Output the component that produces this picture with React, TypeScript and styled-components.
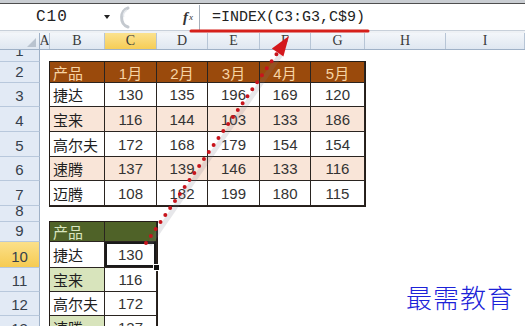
import React from "react";
import styled, { createGlobalStyle } from "styled-components";

const COLS = "40px 10px 55px 52px 51px 52px 51px 54px 81px 1fr";
const ROW_HEIGHTS = [12, 21, 24, 25, 25, 24, 25, 16, 20, 26, 24, 24, 24];

const GlobalStyle = createGlobalStyle`
  html, body { margin: 0; padding: 0; background: #fff; }
  body { width: 525px; height: 326px; overflow: hidden; }
`;

const Frame = styled.div`
  position: relative;
  width: 525px;
  height: 326px;
  overflow: hidden;
  background: #fff;
  font-family: "Liberation Sans", "Noto Sans CJK SC", sans-serif;
`;

const TopEdge = styled.div`
  height: 3px;
  background: #c9cdd2;
  border-bottom: 1px solid #4e4e4e;
`;

const FormulaBar = styled.div`
  display: flex;
  align-items: stretch;
  height: 26px;
  background: #fff;
`;

const NameBox = styled.div`
  width: 67px;
  padding-left: 36px;
  display: flex;
  align-items: center;
  font-family: "Liberation Mono", monospace;
  font-size: 16px;
  letter-spacing: 1px;
  color: #222;
`;

const DropArrow = styled.div`
  width: 13px;
  display: flex;
  align-items: center;
  justify-content: flex-start;
  &::after {
    content: "";
    border-left: 3.5px solid transparent;
    border-right: 3.5px solid transparent;
    border-top: 4px solid #222;
    margin-left: 1px;
  }
`;

const Knob = styled.svg`
  width: 14px;
  height: 26px;
  flex: none;
`;

const FxCell = styled.div`
  flex: none;
  width: 69px;
  display: flex;
  align-items: center;
  justify-content: flex-end;
  padding-right: 6px;
  box-sizing: border-box;
  font-family: "Liberation Serif", serif;
  font-style: italic;
  font-weight: bold;
  font-size: 15px;
  color: #333;
  sub {
    font-size: 9px;
    vertical-align: -1px;
    margin-left: 1px;
    font-weight: normal;
  }
`;

const FormulaInput = styled.div`
  flex: 1;
  display: flex;
  align-items: center;
  margin: 1px 0 0;
  padding-left: 12px;
  border-left: 1px solid #a7b0bb;
  font-family: "Liberation Mono", monospace;
  font-size: 15px;
  color: #222;
`;

const Gap = styled.div`
  height: 2px;
  background: #eef1f5;
  border-top: 1px solid #c8d0da;
`;

const HeaderRow = styled.div`
  display: grid;
  grid-template-columns: ${COLS};
  height: 17px;
  background: linear-gradient(#f3f6fa, #dfe7f1);
  border-bottom: 1px solid #9fb1c7;
  box-sizing: border-box;
`;

const ColHead = styled.div<{ $active?: boolean }>`
  display: flex;
  align-items: center;
  justify-content: center;
  border-right: 1px solid #b7c5d6;
  font-family: "Liberation Serif", serif;
  font-size: 14px;
  color: #3a3a3a;
  background: ${(p) => (p.$active ? "linear-gradient(#fbe28f, #f6cd56)" : "transparent")};
  overflow: hidden;
`;

const Corner = styled.div`
  position: relative;
  border-right: 1px solid #9fb1c7;
  &::after {
    content: "";
    position: absolute;
    right: 3px;
    bottom: 2px;
    border-left: 9px solid transparent;
    border-bottom: 9px solid #b9c3cf;
  }
`;

const Body = styled.div`
  display: grid;
  grid-template-columns: ${COLS};
  grid-template-rows: ${ROW_HEIGHTS.map((h) => `${h}px`).join(" ")};
`;

const RowHead = styled.div<{ $row: number; $active?: boolean }>`
  grid-column: 1;
  grid-row: ${(p) => p.$row};
  display: flex;
  align-items: flex-end;
  justify-content: center;
  overflow: hidden;
  box-sizing: border-box;
  padding-bottom: 2px;
  background: ${(p) => (p.$active ? "linear-gradient(#fbe08a, #f6cb52)" : "#e2eaf5")};
  border-right: 1px solid #9fb1c7;
  border-bottom: 1px solid #b8c8dc;
  font-size: 15px;
  line-height: 17px;
  color: #36404c;
`;

const Table = styled.div<{ $area: string; $cols: string; $rows: string }>`
  grid-area: ${(p) => p.$area};
  display: grid;
  grid-template-columns: ${(p) => p.$cols};
  grid-template-rows: ${(p) => p.$rows};
  outline: 2px solid #241d18;
  outline-offset: -1px;
  align-self: start;
`;

const Cell = styled.div<{ $bg: string; $fg: string; $left?: boolean; $selected?: boolean }>`
  position: relative;
  display: flex;
  align-items: center;
  justify-content: ${(p) => (p.$left ? "flex-start" : "center")};
  padding-left: ${(p) => (p.$left ? "3px" : "0")};
  box-sizing: border-box;
  background: ${(p) => p.$bg};
  color: ${(p) => p.$fg};
  border-right: 1px solid #2a2420;
  border-bottom: 1px solid #2a2420;
  font-size: 15px;
  white-space: nowrap;
  box-shadow: ${(p) => (p.$selected ? "inset 0 0 0 2px #1a1a1a, inset 0 0 0 3px #fff" : "none")};
`;

const FillHandle = styled.span`
  position: absolute;
  right: -4px;
  bottom: -4px;
  width: 5px;
  height: 5px;
  background: #111;
  border: 1px solid #fff;
  z-index: 2;
`;

const Overlay = styled.svg`
  position: absolute;
  left: 0;
  top: 0;
  width: 525px;
  height: 326px;
  pointer-events: none;
  z-index: 5;
`;

const Watermark = styled.div`
  position: absolute;
  right: 11px;
  top: 278px;
  font-family: "Noto Sans CJK SC", sans-serif;
  font-weight: 300;
  font-size: 26px;
  letter-spacing: 1px;
  color: #1c22d8;
  z-index: 6;
`;

const topHead = ["产品", "1月", "2月", "3月", "4月", "5月"];
const topData: [string, number[]][] = [
  ["捷达", [130, 135, 196, 169, 120]],
  ["宝来", [116, 144, 103, 133, 186]],
  ["高尔夫", [172, 168, 179, 154, 154]],
  ["速腾", [137, 139, 146, 133, 116]],
  ["迈腾", [108, 182, 199, 180, 115]],
];
const bottomData: [string, number][] = [
  ["捷达", 130],
  ["宝来", 116],
  ["高尔夫", 172],
  ["速腾", 137],
];

const colLetters = ["A", "B", "C", "D", "E", "F", "G", "H", "I"];

export default function App() {
  const tail = { x: 146, y: 243 };
  const tip = { x: 289, y: 36 };
  const dx = tip.x - tail.x;
  const dy = tip.y - tail.y;
  const len = Math.hypot(dx, dy);
  const ux = dx / len;
  const uy = dy / len;
  const headLen = 20;
  const bx = tip.x - ux * headLen;
  const by = tip.y - uy * headLen;
  const px = -uy;
  const py = ux;
  const hw = 7;
  const head = `${tip.x},${tip.y} ${bx + px * hw},${by + py * hw} ${bx - px * hw},${by - py * hw}`;

  return (
    <Frame>
      <GlobalStyle />
      <TopEdge />
      <FormulaBar>
        <NameBox>C10</NameBox>
        <DropArrow />
        <Knob viewBox="0 0 14 26">
          <path d="M12 4 C4 6 3 20 12 23" fill="none" stroke="#c4c9cf" strokeWidth="3" strokeLinecap="round" />
          <path d="M11 6 C7 8 7 12 8 13" fill="none" stroke="#e5e8ec" strokeWidth="1.5" />
        </Knob>
        <FxCell>
          f<sub>x</sub>
        </FxCell>
        <FormulaInput>=INDEX(C3:G3,C$9)</FormulaInput>
      </FormulaBar>
      <Gap />
      <HeaderRow>
        <Corner />
        {colLetters.map((c) => (
          <ColHead key={c} $active={c === "C"}>
            {c}
          </ColHead>
        ))}
      </HeaderRow>
      <Body>
        {ROW_HEIGHTS.map((_, i) => (
          <RowHead key={i} $row={i + 1} $active={i + 1 === 10}>
            {i + 1}
          </RowHead>
        ))}
        <Table
          $area="2 / 3 / 8 / 9"
          $cols="55px 52px 51px 52px 51px 54px"
          $rows="21px 24px 25px 25px 24px 25px"
        >
          {topHead.map((h, i) => (
            <Cell key={h} $bg="#9a4a0c" $fg="#f7d4a4" $left={i === 0}>
              {h}
            </Cell>
          ))}
          {topData.map(([name, vals], r) => {
            const bg = r % 2 === 1 ? "#f9e5d8" : "#ffffff";
            return (
              <React.Fragment key={name}>
                <Cell $bg={bg} $fg="#1e1e1e" $left>
                  {name}
                </Cell>
                {vals.map((v, j) => (
                  <Cell key={j} $bg={bg} $fg="#333">
                    {v}
                  </Cell>
                ))}
              </React.Fragment>
            );
          })}
        </Table>
        <Table $area="9 / 3 / 14 / 5" $cols="55px 52px" $rows="20px 26px 24px 24px 24px">
          <Cell $bg="#4f6228" $fg="#d9e5bf" $left>
            产品
          </Cell>
          <Cell $bg="#4f6228" $fg="#d9e5bf" />
          {bottomData.map(([name, v], r) => (
            <React.Fragment key={name}>
              <Cell $bg={r % 2 === 1 ? "#d8e4bc" : "#ffffff"} $fg="#1e1e1e" $left>
                {name}
              </Cell>
              <Cell $bg="#ffffff" $fg="#333" $selected={r === 0}>
                {v}
                {r === 0 && <FillHandle />}
              </Cell>
            </React.Fragment>
          ))}
        </Table>
      </Body>
      <Overlay viewBox="0 0 525 326">
        <line x1="191" y1="31" x2="368" y2="31" stroke="#d6201b" strokeWidth="3" strokeLinecap="round" />
        <line
          x1={tail.x + 3}
          y1={tail.y + 2}
          x2={bx + 3}
          y2={by + 2}
          stroke="rgba(120,120,140,0.18)"
          strokeWidth="5"
        />
        <line
          x1={tail.x}
          y1={tail.y}
          x2={bx}
          y2={by}
          stroke="#c8141c"
          strokeWidth="4"
          strokeDasharray="0 8.5"
          strokeLinecap="round"
        />
        <polygon points={head} fill="#d4181d" />
      </Overlay>
      <Watermark>最需教育</Watermark>
    </Frame>
  );
}
